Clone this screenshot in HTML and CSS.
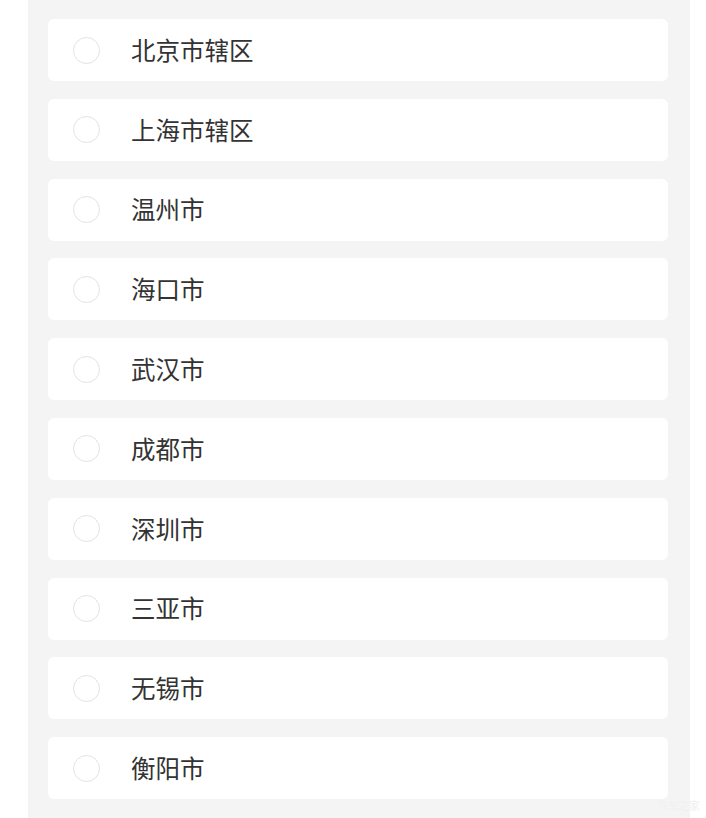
FILE: index.html
```html
<!DOCTYPE html>
<html lang="zh-CN">

<head>
  <meta charset="UTF-8">
  <meta name="viewport" content="width=device-width, initial-scale=1.0">
  <title>选择城市</title>
  <link rel="stylesheet" href="styles.css">
</head>

<body>
  <div class="city-panel">
    <ul class="city-list">
      <li class="city"><span class="radio"></span><span class="city-name">北京市辖区</span></li>
      <li class="city"><span class="radio"></span><span class="city-name">上海市辖区</span></li>
      <li class="city"><span class="radio"></span><span class="city-name">温州市</span></li>
      <li class="city"><span class="radio"></span><span class="city-name">海口市</span></li>
      <li class="city"><span class="radio"></span><span class="city-name">武汉市</span></li>
      <li class="city"><span class="radio"></span><span class="city-name">成都市</span></li>
      <li class="city"><span class="radio"></span><span class="city-name">深圳市</span></li>
      <li class="city"><span class="radio"></span><span class="city-name">三亚市</span></li>
      <li class="city"><span class="radio"></span><span class="city-name">无锡市</span></li>
      <li class="city"><span class="radio"></span><span class="city-name">衡阳市</span></li>
    </ul>
  </div>
  <span class="watermark">汽车之家</span>
</body>

</html>
```

FILE: styles.css
```css
body {
  font-family: "Noto Sans CJK SC", "Noto Sans", sans-serif;
  margin: 0;
  padding: 0;
  background-color: #ffffff;
  height: 818px;
  overflow: hidden;
  position: relative;
}

.city-panel {
  margin-left: 28px;
  width: 662px;
  height: 818px;
  background-color: #f5f4f5;
  padding: 19px 22px 0 20px;
  box-sizing: border-box;
}

.city-list {
  list-style: none;
  margin: 0;
  padding: 0;
  display: flex;
  flex-direction: column;
  gap: 17.8px;
}

.city {
  display: flex;
  align-items: center;
  height: 62px;
  background-color: #ffffff;
  border-radius: 6px;
  padding-left: 25px;
}

.radio {
  width: 25px;
  height: 25px;
  border: 1.5px solid #e4e2e4;
  border-radius: 50%;
  flex-shrink: 0;
}

.city-name {
  margin-left: 31px;
  font-size: 24.5px;
  color: #333333;
  line-height: 1;
}

.watermark {
  position: absolute;
  right: 6px;
  bottom: 5px;
  font-size: 11px;
  color: #f1eff1;
}
```
